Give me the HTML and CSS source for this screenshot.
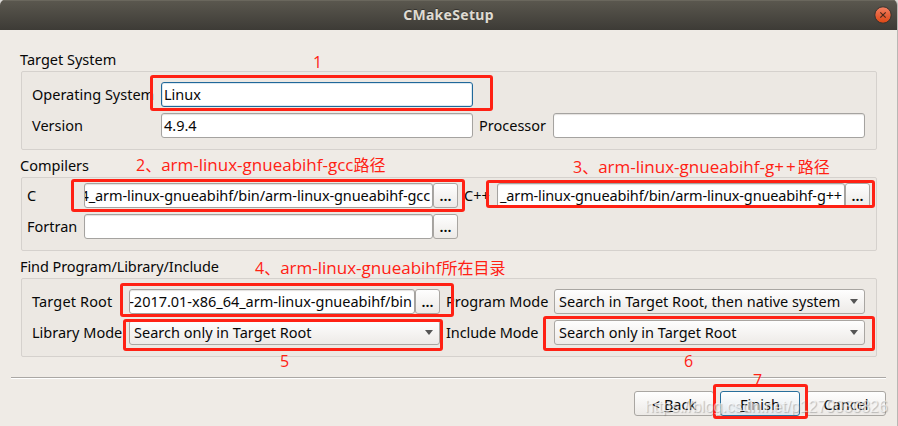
FILE: index.html
```html
<!DOCTYPE html>
<html lang="zh-CN">
<head>
<meta charset="utf-8">
<title>CMakeSetup</title>
<link rel="stylesheet" href="styles.css">
</head>
<body>
<div class="window">
  <header class="titlebar">
    <span class="title">CMakeSetup</span>
    <svg class="close" width="18" height="18" viewBox="0 0 18 18">
      <defs><linearGradient id="orange" x1="0" y1="0" x2="0" y2="1"><stop offset="0" stop-color="#f38264"/><stop offset=".5" stop-color="#e8613a"/><stop offset="1" stop-color="#dd4814"/></linearGradient></defs>
      <circle cx="9" cy="9" r="8.2" fill="url(#orange)" stroke="#35332f"/>
      <path d="M6.3 6.3l5.4 5.4M11.7 6.3l-5.4 5.4" stroke="#4b2a1c" stroke-width="1.2"/>
    </svg>
  </header>
  <main class="content">
    <h2 class="heading">Target System</h2>
    <section class="group system">
      <label>Operating System</label><div class="field focus">Linux</div><i></i><i></i>
      <label>Version</label><div class="field">4.9.4</div>
      <label>Processor</label><div class="field"></div>
    </section>
    <h2 class="heading">Compilers</h2>
    <section class="group compilers">
      <label>C</label><div class="picker"><div class="field tail"><span class="path-gcc">4_arm-linux-gnueabihf/bin/arm-linux-gnueabihf-gcc</span></div><button class="browse">...</button></div>
      <label>C++</label><div class="picker"><div class="field tail"><span class="path-gpp">_arm-linux-gnueabihf/bin/arm-linux-gnueabihf-g++</span></div><button class="browse">...</button></div>
      <label>Fortran</label><div class="picker"><div class="field"></div><button class="browse">...</button></div>
    </section>
    <h2 class="heading tight">Find Program/Library/Include</h2>
    <section class="group search">
      <label class="loose">Target Root</label><div class="picker"><div class="field tail"><span class="path-bin">-2017.01-x86_64_arm-linux-gnueabihf/bin</span></div><button class="browse">...</button></div>
      <label>Program Mode</label><div class="combo"><span>Search in Target Root, then native system</span></div>
      <label>Library Mode</label><div class="combo"><span>Search only in Target Root</span></div>
      <label class="tight">Include Mode</label><div class="combo"><span>Search only in Target Root</span></div>
    </section>
    <footer class="actions">
      <button class="button">&lt; <u>B</u>ack</button>
      <button class="button default"><u>F</u>inish</button>
      <button class="button">Cancel</button>
    </footer>
  </main>
  <div class="mark m1"></div><div class="mark m2"></div><div class="mark m3"></div><div class="mark m4"></div>
  <div class="mark m5"></div><div class="mark m6"></div><div class="mark m7"></div>
  <span class="note n1">1</span>
  <span class="note n2">2、<b>arm-linux-gnueabihf-gcc</b>路径</span>
  <span class="note n3">3、<b>arm-linux-gnueabihf-g<span class="plus">++</span></b>路径</span>
  <span class="note n4">4、<b>arm-linux-gnueabihf</b>所在目录</span>
  <span class="note n5">5</span>
  <span class="note n6">6</span>
  <span class="note n7">7</span>
  <span class="watermark">https://blog.csdn.net/p1279030826</span>
</div>
</body>
</html>
```
FILE: styles.css
```css
* { box-sizing: border-box; }
body { margin: 0; background: #dcdad7; }
.window {
  position: relative; width: 898px; height: 426px; overflow: hidden;
  border-right: 1px solid #b9b7b4; border-radius: 5px 5px 0 0;
  background: #efebe6; color: #080808;
  font: 14.5px/20px "Noto Sans", "Noto Sans CJK SC", sans-serif;
  white-space: nowrap;
}
.titlebar {
  display: grid; grid-template-columns: 1fr auto 1fr; align-items: center;
  height: 30px;
  background: linear-gradient(#5b584f, #3d3b36); box-shadow: inset 0 1px #6a675d;
}
.title { grid-column: 2; color: #dfdbd2; font-weight: 700; font-size: 14px; letter-spacing: .3px; text-shadow: 0 -1px #35332f; }
.close { justify-self: end; margin-right: 5px; }
.content { padding: 19px 11px 0; }
.heading { margin: 0 0 2px 9px; height: 20px; font-size: inherit; font-weight: 400; }
.tight { letter-spacing: -.09px; }
.loose { letter-spacing: .15px; }
.group {
  display: grid; row-gap: 6px; align-content: start; align-items: center;
  width: 856px; margin: 0 0 5px 10px; padding: 10px 10px;
  border: 1px solid #d5d1cd; border-radius: 2px; background: #ece8e3;
}
.system { grid-template-columns: 129px 312px 80px 312px; height: 79px; }
.compilers { grid-template-columns: 57px 374px 39px 373px; height: 74px; padding: 5px; }
.search { grid-template-columns: 97px 311px 114px 311px; height: 79px; }
label { height: 25px; line-height: 24px; }
.system label:nth-of-type(3), .search label:nth-of-type(even), .compilers label:nth-of-type(2) { padding-left: 6px; }
.field {
  height: 25px; padding-left: 2px; line-height: 23px; overflow: hidden;
  border: 1px solid #a5a3a0; border-radius: 3px; background: #fff;
  box-shadow: inset 0 1px 1px #e4e2df;
}
.focus { border-color: #20689a; box-shadow: inset 0 0 0 1px #dce8f0; }
.picker { display: flex; }
.picker .field { flex: 1; min-width: 0; }
.tail { display: flex; justify-content: flex-end; padding: 0 2px 0 0; }
.path-gcc { letter-spacing: -.1px; }
.path-gpp { letter-spacing: -.14px; }
.path-bin { letter-spacing: -.02px; }
button { font: inherit; color: inherit; padding: 0; }
.browse, .button, .combo {
  height: 25px; border: 1px solid #a9a6a2; border-radius: 3px;
  background: linear-gradient(#fefefe, #edeae7); line-height: 22px;
}
.browse { width: 25px; line-height: 20px; padding-bottom: 2px; font-weight: 600; }
.combo { display: flex; justify-content: space-between; align-items: center; padding: 0 6px 0 4px; line-height: 23px; }
.combo::after { content: ""; border: 4px solid transparent; border-top: 5px solid #555; border-bottom: 0; }
.actions {
  display: flex; justify-content: flex-end; gap: 6px;
  margin-top: 20px; padding-top: 13px; border-top: 1px solid #aaa7a4; box-shadow: inset 0 1px #fff;
}
.button { width: 80px; }
.default { border-color: #286f9c; background: linear-gradient(#fff, #e0e8ed); }
.mark { position: absolute; border: 3px solid #ff2114; border-radius: 3px; }
.m1 { left: 150px; top: 75px; width: 343px; height: 36px; }
.m2 { left: 71px; top: 179px; width: 394px; height: 33px; }
.m3 { left: 486px; top: 180px; width: 389px; height: 28px; }
.m4 { left: 120px; top: 283px; width: 334px; height: 34px; }
.m5 { left: 123px; top: 319px; width: 320px; height: 32px; }
.m6 { left: 543px; top: 316px; width: 332px; height: 35px; }
.m7 { left: 713px; top: 384px; width: 95px; height: 35px; }
.note { position: absolute; color: #ff2114; font: 16px/20px "Open Sans", "Noto Sans CJK SC", sans-serif; }
.note b { font-weight: 400; font-size: 17px; }
.plus { letter-spacing: 2px; }
.n1 { left: 313px; top: 52px; }
.n2 { left: 136px; top: 155px; }
.n3 { left: 573px; top: 157px; }
.n4 { left: 255px; top: 258px; }
.n5 { left: 280px; top: 351px; }
.n6 { left: 684px; top: 351px; }
.n7 { left: 753px; top: 370px; }
.watermark {
  position: absolute; left: 645px; top: 397px; font: 15.8px/20px "Liberation Sans", sans-serif;
  color: rgba(255,255,255,.6); text-shadow: 1px 1px 1px rgba(100,100,100,.4);
}
```
